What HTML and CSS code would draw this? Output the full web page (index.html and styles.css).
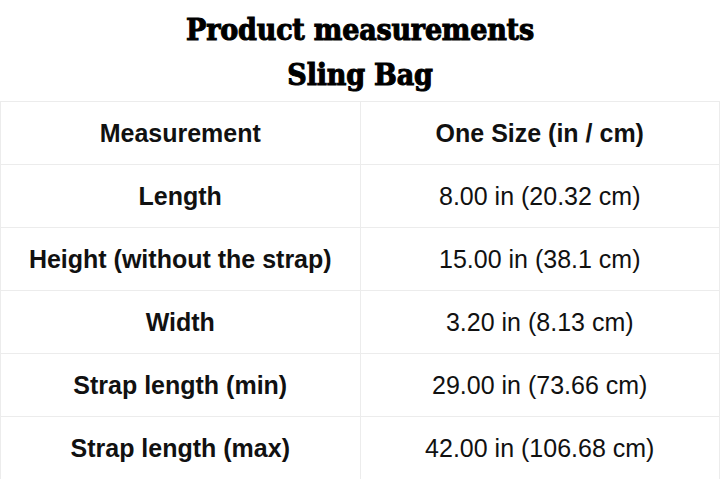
FILE: index.html
```html
<!DOCTYPE html>
<html>
<head>
<meta charset="utf-8">
<link rel="stylesheet" href="styles.css">
</head>
<body>
<div class="page">
  <header class="title">
    <h1>Product measurements</h1>
    <h1>Sling Bag</h1>
  </header>
  <table class="sizes">
    <tr class="head"><td>Measurement</td><td>One Size (in / cm)</td></tr>
    <tr><td>Length</td><td>8.00 in (20.32 cm)</td></tr>
    <tr><td>Height (without the strap)</td><td>15.00 in (38.1 cm)</td></tr>
    <tr><td>Width</td><td>3.20 in (8.13 cm)</td></tr>
    <tr><td>Strap length (min)</td><td>29.00 in (73.66 cm)</td></tr>
    <tr><td>Strap length (max)</td><td>42.00 in (106.68 cm)</td></tr>
  </table>
</div>
</body>
</html>
```
FILE: styles.css
```css
html, body {
  margin: 0;
  padding: 0;
  background: #ffffff;
}
.page {
  width: 720px;
  height: 479px;
  overflow: hidden;
}
.title {
  height: 101px;
  display: flex;
  flex-direction: column;
  align-items: center;
  padding-top: 7px;
  box-sizing: border-box;
}
.title h1 {
  margin: 0;
  font-family: "DejaVu Serif Condensed", "DejaVu Serif", serif;
  font-stretch: condensed;
  font-weight: 900;
  font-size: 30px;
  line-height: 45px;
  color: #000;
  letter-spacing: -0.2px;
  -webkit-text-stroke: 1px #000;
}
.sizes {
  width: 720px;
  border-collapse: collapse;
  table-layout: fixed;
  font-family: "Liberation Sans", Arial, sans-serif;
  font-size: 25px;
  color: #111;
}
.sizes td {
  width: 50%;
  height: 62px;
  padding: 0;
  text-align: center;
  vertical-align: middle;
  border: 1px solid #ececec;
}
.sizes td:first-child {
  font-weight: bold;
}
.sizes .head td {
  font-weight: bold;
}
```
